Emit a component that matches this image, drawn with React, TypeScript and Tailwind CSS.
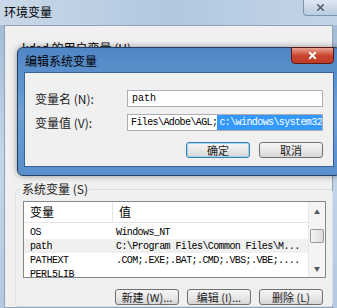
import { X } from "lucide-react";

const cjk = "font-['Noto_Sans_CJK_SC','Noto_Sans',sans-serif]";
const mono = "font-['Liberation_Mono',monospace]";

const rows = [
  { name: "OS", value: "Windows_NT", sel: false },
  { name: "path", value: "C:\\Program Files\\Common Files\\M...", sel: true },
  { name: "PATHEXT", value: ".COM;.EXE;.BAT;.CMD;.VBS;.VBE;....", sel: false },
  { name: "PERL5LIB", value: "", sel: false },
];

const WinButton = ({ label, primary }: { label: string; primary?: boolean }) => (
  <button
    className={`h-[16px] w-[64px] rounded-[3px] border text-[11px] leading-none text-[#222] bg-gradient-to-b from-[#f6f6f6] via-[#e8e8e8] to-[#d6d6d6] ${cjk} ${
      primary ? "border-[#3c7fb1] shadow-[inset_0_0_0_1px_#9fd3f2]" : "border-[#707070]"
    }`}
  >
    {label}
  </button>
);

export default function App() {
  return (
    <div className={`relative w-[337px] h-[308px] overflow-hidden bg-gradient-to-b from-[#9db6d2] via-[#c5d6e8] to-[#b4c9df] ${cjk}`}>
      {/* outer window: 环境变量 */}
      <div className="flex flex-col h-full">
        <div className="h-[25px] flex items-start justify-between bg-gradient-to-r from-[#c9d8e8] via-[#b2c8e0] to-[#c3d4e6]">
          <span className="pl-[4px] pt-[4px] text-[12px] leading-[16px] text-black">环境变量</span>
          <div className="w-[34px] h-[16px] rounded-bl-[4px] border border-t-0 border-r-0 border-[#7d95b2] bg-gradient-to-b from-[#dde7f2] to-[#b9cbe0] flex items-center justify-center">
            <X size={11} strokeWidth={3.5} className="text-[#555d68]" />
          </div>
        </div>
        <div className="flex-1 flex pl-[4px] pr-[4px]">
          <div className="flex-1 bg-[#f0f0f0] border border-[#8fa2b8] flex flex-col">
            <div className="pl-[17px] pt-[15px] text-[12px] leading-[14px] text-black">kdsd 的用户变量 (U)</div>
            <div className="h-[129px]" />
            {/* 系统变量 group */}
            <div className="relative ml-[10px] mr-[-1px] mt-[5px] flex-1 border border-[#d5dfe5] rounded-[3px] pt-[11px] pl-[7px] pr-[6px]">
              <span className="absolute left-[5px] top-[-9px] px-[1px] bg-[#f0f0f0] text-[12px] leading-[16px] text-[#222]">系统变量 (S)</span>
              <div className="h-[77px] bg-white border border-[#828790] flex overflow-hidden">
                <div className="flex-1 flex flex-col">
                  <div className="h-[21px] flex items-center border-b border-[#e5e5e5] text-[12px] text-black shrink-0">
                    <span className="w-[89px] pl-[6px] border-r border-[#e5e5e5] h-full flex items-center">变量</span>
                    <span className="pl-[6px]">值</span>
                  </div>
                  <div className={`pt-[2px] text-[10px] text-black ${mono}`}>
                    {rows.map((r) => (
                      <div key={r.name} className={`h-[14px] flex items-center ${r.sel ? "bg-[#f0f0f0]" : ""}`}>
                        <span className="w-[89px] pl-[6px] tracking-[-0.5px]">{r.name}</span>
                        <span className="pl-[3px] tracking-[-0.6px] whitespace-nowrap">{r.value}</span>
                      </div>
                    ))}
                  </div>
                </div>
                <div className="w-[17px] bg-[#f4f4f4] border-l border-[#e8e8e8] flex flex-col items-center pt-[7px] pb-[5px]">
                  <span className="text-[6px] leading-none text-[#555]">▲</span>
                  <div className="mt-[14px] w-[14px] h-[14px] rounded-[2px] border border-[#979797] bg-gradient-to-r from-[#f4f4f4] to-[#dcdcdc]" />
                  <div className="flex-1" />
                  <span className="text-[6px] leading-none text-[#555]">▼</span>
                </div>
              </div>
              <div className="flex justify-end gap-[8px] mt-[11px] pr-[3px]">
                <WinButton label="新建 (W)..." />
                <WinButton label="编辑 (I)..." />
                <WinButton label="删除 (L)" />
              </div>
            </div>
          </div>
        </div>
      </div>

      {/* dialog: 编辑系统变量 */}
      <div className="absolute left-[17px] top-[47px] w-[324px] h-[129px] rounded-[6px] border border-[#1f3d66] bg-gradient-to-b from-[#4f86c6] via-[#6e9fd6] to-[#5a8fcc] shadow-[0_0_6px_rgba(0,0,0,0.4)] flex flex-col">
        <div className="h-[24px] relative flex items-center">
          <span className="pl-[7px] pt-[2px] text-[12px] text-black">编辑系统变量</span>
          <div className="absolute right-[6px] top-[-1px] w-[43px] h-[17px] rounded-b-[4px] border border-[#5b1a12] bg-gradient-to-b from-[#e8a493] via-[#c9452f] to-[#c23a26] flex items-center justify-center">
            <X size={11} strokeWidth={4} className="text-white" />
          </div>
        </div>
        <div className="flex-1 mx-[6px] mb-[8px] bg-[#f0f0f0] border border-[#37629a] flex flex-col pl-[10px] pr-[10px] pt-[17px]">
          <div className="flex items-center h-[17px]">
            <span className="w-[92px] text-[12px] text-[#222]">变量名 (N):</span>
            <div className={`flex-1 h-[17px] bg-white border border-[#abadb3] flex items-center pl-[4px] text-[10px] text-black ${mono}`}>path</div>
          </div>
          <div className="flex items-center h-[17px] mt-[7px]">
            <span className="w-[92px] text-[12px] text-[#222]">变量值 (V):</span>
            <div className={`flex-1 h-[17px] bg-white border border-[#abadb3] flex items-center pl-[3px] text-[10px] text-black tracking-[-0.6px] whitespace-nowrap overflow-hidden ${mono}`}>
              <span>Files\Adobe\AGL;</span>
              <span className="bg-[#3399ff] text-white pl-[2px]">c:\windows\system32</span>
            </div>
          </div>
          <div className="flex justify-end gap-[9px] mt-[11px]">
            <WinButton label="确定" primary />
            <WinButton label="取消" />
          </div>
        </div>
      </div>
    </div>
  );
}
